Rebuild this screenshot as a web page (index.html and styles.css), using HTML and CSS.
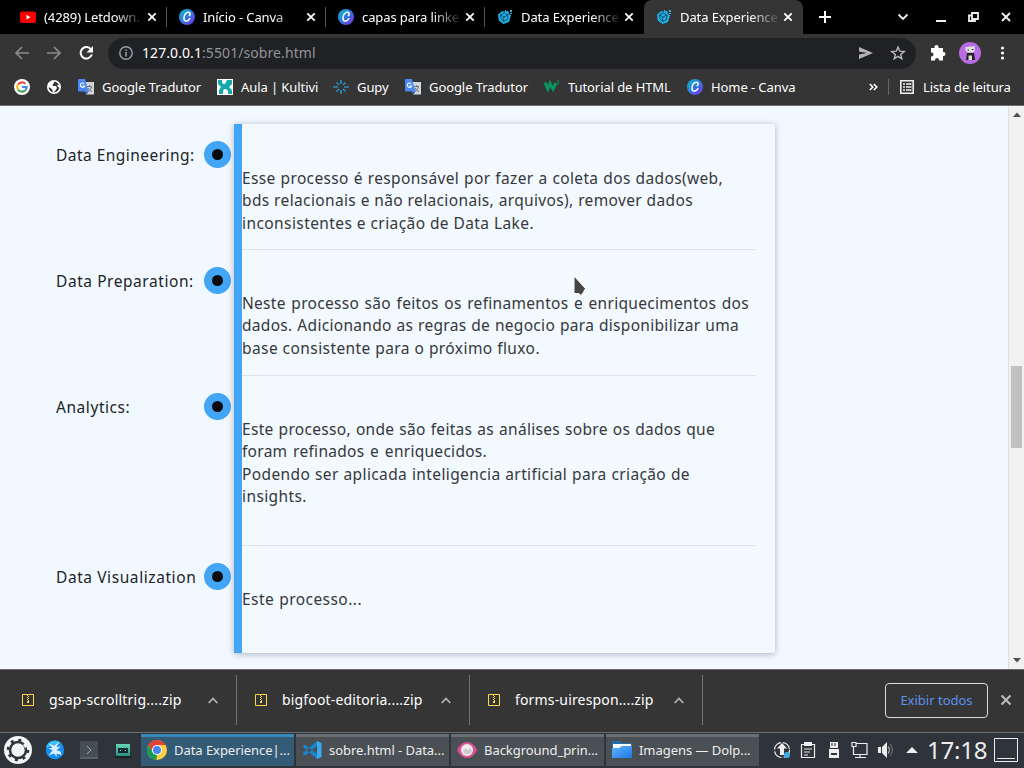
FILE: index.html
```html
<!DOCTYPE html>
<html lang="pt-BR">
<head>
<meta charset="utf-8">
<title>Data Experience</title>
<link rel="stylesheet" href="styles.css">
</head>
<body>
<svg class="defs" width="0" height="0">
  <defs>
    <linearGradient id="canvaFill" x1="0" y1="0" x2="1" y2="1"><stop offset="0" stop-color="#12bccd"/><stop offset=".4" stop-color="#2587dc"/><stop offset="1" stop-color="#7d2ae8"/></linearGradient>
    <linearGradient id="folderFill" x1="0" y1="0" x2="1" y2="1"><stop offset="0" stop-color="#5fb4ff"/><stop offset="1" stop-color="#1c78e4"/></linearGradient>
    <linearGradient id="tapeFill" x1="0" y1="0" x2="0" y2="1"><stop offset="0" stop-color="#65d6b4"/><stop offset="1" stop-color="#2d8d83"/></linearGradient>
    <symbol id="canva" viewBox="0 0 16 16"><circle cx="8" cy="8" r="8" fill="url(#canvaFill)"/><path d="M10.300 6.600c1.200-.7 1.300-3-.5-3.300-2.300-.4-4.900 2.600-4.900 5.700 0 4 3.900 4.100 6 .7" fill="none" stroke="#fff" stroke-width="1.500" stroke-linecap="round"/></symbol>
    <symbol id="cube" viewBox="0 0 16 16"><path d="M5 2.300 1 5.500l.8 6L6.500 15l5.500-2 1.700-6-3-4z" fill="#20b0e8"/><path d="m3.500 6 3.800-2L11 6l-.6 4.500L6.500 12.500 4 10zM3.500 6l3.300 2L11 6M6.800 8l-.3 4.500" fill="none" stroke="#0b455e" stroke-width=".9"/><path d="M9.500 2h2v2h-2zM13 1h2v2h-2zM13 4h2v1h-2zM8 1h1v2H8zM12 6h2v1h-2z" fill="#35b5e5"/></symbol>
    <symbol id="close" viewBox="0 0 10 10"><path d="m1.300 1.300 7.400 7.400m0-7.400L1.300 8.700" fill="none" stroke="currentColor" stroke-width="1.800"/></symbol>
    <symbol id="translate" viewBox="0 0 16 16"><path d="M6 3h10v12.500H8z" fill="#d3d6d9"/><path d="M9 7.500h5M11.500 6v1.500M13.500 7.500c-.5 2.500-2 4-3.500 5M10 9c1 2 2.500 3 4 3.500" fill="none" stroke="#68747c"/><path d="M0 1q0-1 1-1h6l3.500 12.500H1q-1 0-1-1z" fill="#4a89f3"/><path d="M6.200 4.700A2.200 2.200 0 1 0 6.600 7H4.600" fill="none" stroke="#fff" stroke-width="1.100"/><path d="M7 12.500h3.500L8.500 16z" fill="#3265c7"/></symbol>
    <symbol id="zip" viewBox="0 0 12 12"><path d="M.5.5h11v11H.5z" fill="none" stroke="#ffd451"/><path d="M5 1h1v1H5zM6 2h1v1H6zM5 3h1v1H5zM6 4h1v1H6zM5 5h1v1H5zM6 6h1v1H6zM5 7h2v2H5z" fill="#ffd451"/></symbol>
    <symbol id="up" viewBox="0 0 10 7"><path d="m.7 6 4.300-4.500L9.300 6" fill="none" stroke="#b5b5b5" stroke-width="1.700"/></symbol>
  </defs>
</svg>
<div class="desktop">
  <header class="tabs">
    <div class="tab"><svg class="i16" viewBox="0 0 16 16"><rect y="2.500" width="16" height="11.500" rx="2.500" fill="#f00"/><path d="m6.500 5.800 4 2.400-4 2.400z" fill="#fff"/></svg><span class="title">(4289) Letdown.</span><svg class="close"><use href="#close"/></svg></div>
    <div class="tab"><svg class="i16"><use href="#canva"/></svg><span class="title">Início - Canva</span><svg class="close"><use href="#close"/></svg></div>
    <div class="tab"><svg class="i16"><use href="#canva"/></svg><span class="title">capas para linke</span><svg class="close"><use href="#close"/></svg></div>
    <div class="tab last"><svg class="i16"><use href="#cube"/></svg><span class="title">Data Experience</span><svg class="close"><use href="#close"/></svg></div>
    <div class="tab active"><svg class="i16"><use href="#cube"/></svg><span class="title">Data Experience</span><svg class="close"><use href="#close"/></svg></div>
    <svg class="plus" viewBox="0 0 12 12"><path d="M6 0v12M0 6h12" stroke="#fff" stroke-width="2"/></svg>
    <svg class="window-buttons" viewBox="0 0 124 34"><g fill="none" stroke="#eee" stroke-width="1.800"><path d="m9.500 14.500 4.500 4.500 4.500-4.500M47 21h10M83 13h6v6h-6zM83 15.500h-3V21h6v-2"/><path d="m113 13 8 8m0-8-8 8" stroke-width="2"/></g></svg>
  </header>
  <div class="toolbar">
    <svg class="nav" viewBox="0 0 108 36"><g fill="none" stroke="#8b8b8b" stroke-width="1.700"><path d="M29 19H16m6-6-6 6 6 6M47 19h13m-6-6 6 6-6 6"/></g><path d="M91 15.500a5.700 5.700 0 1 0 .8 5" fill="none" stroke="#fff" stroke-width="2"/><path d="M93 12v6.500h-6.500z" fill="#fff"/></svg>
    <div class="address">
      <svg class="info" viewBox="0 0 14 14"><circle cx="7" cy="7" r="6.200" fill="none" stroke="#9aa0a6" stroke-width="1.400"/><path d="M7 6v4.500M7 3.500V5" stroke="#9aa0a6" stroke-width="1.500"/></svg>
      <span class="url"><b>127.0.0.1</b>:5501/sobre.html</span>
      <svg class="url-icons" viewBox="0 0 48 16"><path d="M1 2 15 8 1 14V9.500L9 8 1 6.500z" fill="#b4b4b4"/><path d="m40 2 1.700 4.200 4.500.3-3.500 2.900 1.100 4.400-3.800-2.400-3.800 2.400 1.100-4.400-3.500-2.900 4.500-.3z" fill="none" stroke="#bbb" stroke-width="1.400"/></svg>
    </div>
    <svg class="extensions" viewBox="0 0 108 36"><path d="M15 14h3.500v-1a2 2 0 0 1 4 0v1H27v4h.5a2 2 0 0 1 0 4H27v4.500h-4v-.5a2 2 0 0 0-4 0v.5h-4v-4h.5a2 2 0 0 0 0-4H15z" fill="#fff"/><circle cx="54" cy="19" r="11" fill="#b76ce3"/><path d="m49.500 13 2 0 1.500-.5h3l2.500-.5.5 4-1.500 2.500h-6l-2-2z" fill="#ddd"/><path d="m51 19-1 7h9l-1-7z" fill="#242126"/><path d="M52.500 21.500h3.500V26h-3.500z" fill="#ddd"/><path d="M51.500 15.500h1.500v1h-1.500zM56 15h1.500v1H56z" fill="#29242b"/><g fill="#fff"><circle cx="86.500" cy="14" r="1.600"/><circle cx="86.500" cy="19" r="1.600"/><circle cx="86.500" cy="24" r="1.600"/></g></svg>
  </div>
  <nav class="bookmarks">
    <div class="bookmark"><svg class="i16" viewBox="0 0 16 16"><circle cx="8" cy="8" r="8" fill="#fff"/><g fill="none" stroke-width="2"><path d="M11.300 4.800A4.700 4.700 0 0 0 4 5.500" stroke="#ea4335"/><path d="M4 5.500a4.700 4.700 0 0 0 0 5" stroke="#fbbc05"/><path d="M4 10.500a4.700 4.700 0 0 0 7.300.8" stroke="#34a853"/><path d="M8 8h4.700a4.700 4.700 0 0 1-1.400 3.300" stroke="#4285f4"/></g></svg></div>
    <div class="bookmark"><svg class="i16" viewBox="0 0 16 16"><circle cx="8" cy="8" r="6.200" fill="none" stroke="#fff" stroke-width="1.600"/><path d="M2 4.500 6 2l2.500 0L8 4 6.500 5.500 7 7h3l1 2-1.500 2.500L7 14l-.5-3L4 8.500H2zM11 6l3 0v3l-2-1z" fill="#fff"/></svg></div>
    <div class="bookmark"><svg class="i16"><use href="#translate"/></svg><span>Google Tradutor</span></div>
    <div class="bookmark"><svg class="i16" viewBox="0 0 16 16"><path d="M0 0h16v16H0z" fill="#fff"/><path d="M1 1h4v2l1 2h2l2-4h5v4l-3 3 3 3v4h-4v-3l-2-2H7l-1 2v3H2v-4l2-3-3-3z" fill="#17a9ac"/></svg><span>Aula | Kultivi</span></div>
    <div class="bookmark"><svg class="i16" viewBox="0 0 16 16"><path d="M8 1v4M8 11v4M0 8h5M11 8h5M3.500 3.500 6 6M10 10l2.500 2.500M12.500 3.500 10 6M6 10l-2.500 2.500" stroke="#278fb9" stroke-width="1.700"/></svg><span>Gupy</span></div>
    <div class="bookmark"><svg class="i16"><use href="#translate"/></svg><span>Google Tradutor</span></div>
    <div class="bookmark"><svg class="i16" viewBox="0 0 16 16"><path d="m1 3.500 3 6.500 2-5.500L9 10l3-6" fill="none" stroke="#07965f" stroke-width="3"/><path d="M13 2h2l-1 1.500q2 .5 0 2h-1" fill="none" stroke="#07965f"/></svg><span>Tutorial de HTML</span></div>
    <div class="bookmark"><svg class="i16"><use href="#canva"/></svg><span>Home - Canva</span></div>
    <div class="reading"><svg class="more" viewBox="0 0 9 8"><path d="m.8 1 3 3-3 3M4.800 1l3 3-3 3" fill="none" stroke="#fff" stroke-width="1.600"/></svg><svg class="list" viewBox="0 0 14 14"><path d="M.8.800h12.400v12.400H.8z" fill="none" stroke="#eee" stroke-width="1.600"/><path d="M3 4h2M6 4h5.500M3 7h2M6 7h5.500M3 10h2M6 10h5.500" stroke="#eee" stroke-width="1.500"/></svg><span>Lista de leitura</span></div>
  </nav>
  <main class="page">
    <div class="labels">
      <div class="step"><span class="label">Data Engineering:</span><i class="dot"></i></div>
      <div class="step"><span class="label preparation">Data Preparation:</span><i class="dot"></i></div>
      <div class="step tall"><span class="label preparation">Analytics:</span><i class="dot"></i></div>
      <div class="step"><span class="label visualization">Data Visualization</span><i class="dot"></i></div>
    </div>
    <section class="card">
      <p class="entry first"><span class="line w481">Esse processo é responsável por fazer a coleta dos dados(web,</span><span class="line w451">bds relacionais e não relacionais, arquivos), remover dados</span><span class="line w292">inconsistentes e criação de Data Lake.</span></p>
      <p class="entry"><span class="line w507">Neste processo são feitos os refinamentos e enriquecimentos dos</span><span class="line w497">dados. Adicionando as regras de negocio para disponibilizar uma</span><span class="line w298">base consistente para o próximo fluxo.</span></p>
      <p class="entry tall"><span class="line w473">Este processo, onde são feitas as análises sobre os dados que</span><span class="line w245">foram refinados e enriquecidos.</span><span class="line w448">Podendo ser aplicada inteligencia artificial para criação de</span><span class="line w64">insights.</span></p>
      <p class="entry final"><span class="line w120">Este processo...</span></p>
    </section>
    <svg class="cursor" viewBox="0 0 16 22"><path d="M2 1v17.500h5l2 2 2-2.500 2.500-4.500z" fill="#454545" stroke="#fff"/></svg>
    <aside class="scrollbar"><svg class="arrow" viewBox="0 0 8 5"><path d="M0 5 4 .5 8 5z" fill="#505050"/></svg><i class="thumb"></i><svg class="arrow down" viewBox="0 0 8 5"><path d="m0 0 4 4.500L8 0z" fill="#505050"/></svg></aside>
  </main>
  <div class="downloads">
    <div class="file"><svg class="zip"><use href="#zip"/></svg><span>gsap-scrolltrig....zip</span><svg class="up"><use href="#up"/></svg></div>
    <div class="file"><svg class="zip"><use href="#zip"/></svg><span>bigfoot-editoria....zip</span><svg class="up"><use href="#up"/></svg></div>
    <div class="file"><svg class="zip"><use href="#zip"/></svg><span>forms-uirespon....zip</span><svg class="up"><use href="#up"/></svg></div>
    <span class="show-all">Exibir todos</span>
    <svg class="dismiss" viewBox="0 0 12 12"><use href="#close" width="12" height="12"/></svg>
  </div>
  <footer class="taskbar">
    <svg class="launchers" viewBox="0 0 141 36"><circle cx="18" cy="18" r="14" fill="#f3f4f5"/><circle cx="18" cy="18" r="8" fill="none" stroke="#2f343a" stroke-width="2.500"/><circle cx="18" cy="18" r="10" fill="none" stroke="#2f343a" stroke-width="2.600" stroke-dasharray="3 4.854"/><path d="m23 13 5-5 2 4-5 4z" fill="#f3f4f5"/>
      <circle cx="55" cy="18" r="9.200" fill="#168df1"/><path d="M46 16a9 9 0 0 1 15-5l-8 2z" fill="#36c1fa"/><path d="m48.500 11.500 5.500 2 5.500-3.500-3 5 4.500-.5-4.500 3.500 4 1.500 1 3.500-5-1.500.500 3.500-3-3.500-5.500 2 4-5-4-2.500h4z" fill="#d9efff"/>
      <path d="M80 9h18v18H80z" fill="#454e50"/><path d="M80 25h18v2H80z" fill="#596264"/><path d="m87 14 4 4-4 4" fill="none" stroke="#a0a8aa"/>
      <path d="M115 23h16v3h-16z" fill="#172326"/><path d="M116 12h14v12h-14z" fill="url(#tapeFill)"/><path d="M118 16h10v5h-10z" fill="#132d30"/><path d="M120 18h1v1h-1zM125 18h1v1h-1z" fill="#86efd0"/></svg>
    <div class="task current"><svg class="i20" viewBox="0 0 20 20"><circle cx="10" cy="10" r="10" fill="#ffcd40"/><path d="M1.300 5A10 10 0 0 1 18.700 5H10L5.700 12.500z" fill="#e04436"/><path d="M1.300 5 5.700 12.500 10 15 9.500 20A10 10 0 0 1 1.300 5" fill="#179c52"/><circle cx="10" cy="10" r="5" fill="#fff"/><circle cx="10" cy="10" r="4" fill="#4285f4"/></svg><span>Data Experience|...</span></div>
    <div class="task"><svg class="i20" viewBox="0 0 20 20"><path d="m1 6 2-1.500L15 14v5L1 7zM1 14l2 1.500L15 6V1L1 13z" fill="#1686ce"/><path d="m15 1 4.500 2v14L15 19z" fill="#3aabf0"/></svg><span>sobre.html - Data...</span></div>
    <div class="task"><svg class="i20" viewBox="0 0 20 20"><path d="M0 10Q4 2 10 2t10 8q-4 8-10 8T0 10" fill="#dc4f96"/><circle cx="10" cy="10" r="6" fill="#eee"/><path d="m6 11 3-3 2 2 2-2 2 3-2 3H8z" fill="#cacaca"/></svg><span>Background_prin...</span></div>
    <div class="task"><svg class="i20" viewBox="0 0 20 20"><path d="M0 1h8l2 2h10v6H0z" fill="#236fab"/><path d="M1 4h18v5H1z" fill="#fff"/><path d="M0 8h7l3-2h10v12H0z" fill="url(#folderFill)"/></svg><span>Imagens — Dolp...</span></div>
    <svg class="tray" viewBox="0 0 165 36"><g fill="none" stroke="#eee" stroke-width="1.200"><circle cx="21" cy="18" r="7.500" stroke-dasharray="10 2"/><path d="M40.500 12.500h13v13h-13zM43 17h8M43 20h6M43 23h4M95 11.500h11v11H95M91 10.500v4h4v-4zM92.500 14.500v8H95M99 23v2m-5 .500h11"/><path d="M129 12q5 5.500 0 12" stroke="#6a6e72"/><path d="M127 14.500q3 3.500 0 7" stroke="#aaa"/></g><path d="m21 11 5 5.500h-3V23h-4v-6.500h-3zM43 10h8v4h-8zM69 10h8v6h-8zM68 17h10v9H68zM117 15h3v6h-3zM121 15l5-5v16l-5-5zM145 21l6-6 6 6z" fill="#eee"/><path d="M71 11v3m3-3v3" stroke="#2f343a"/><path d="M70 22h6" stroke="#2f343a" stroke-width="2"/><circle cx="26" cy="23" r="3" fill="#3daee9"/></svg>
    <time class="clock">17:18</time>
    <svg class="show-desktop" viewBox="0 0 24 24"><path d="M.5.500h23v23H.5zM3 20.500h18" fill="none" stroke="#eee"/></svg>
  </footer>
</div>
</body>
</html>
```
FILE: styles.css
```css
* { box-sizing: border-box; }
body { margin: 0; font-family: "Noto Sans", sans-serif; font-size: 13px; color: #fff; }
svg { display: block; flex: none; }
.defs { position: absolute; }
.desktop { width: 1024px; height: 768px; display: flex; flex-direction: column; overflow: hidden; position: relative; }
.i16 { width: 16px; height: 16px; }
.i20 { width: 20px; height: 20px; }

.tabs { height: 34px; background: #000; display: flex; align-items: center; padding-left: 8px; flex: none; }
.tab { width: 159px; height: 34px; display: flex; align-items: center; padding-left: 12px; background: linear-gradient(#555, #555) right center / 1px 20px no-repeat; flex: none; }
.tab.last { background: none; }
.tab.active { background: #353535; border-radius: 8px 8px 0 0; }
.title { width: 98px; margin-left: 8px; white-space: nowrap; letter-spacing: -.1px; mask-image: linear-gradient(90deg, #000 72%, rgba(0, 0, 0, .15) 98%); }
.close { width: 10px; height: 10px; margin-left: 5px; color: #fff; }
.plus { width: 12px; height: 12px; margin-left: 16px; }
.window-buttons { width: 124px; height: 34px; margin-left: 58px; }

.toolbar { height: 35px; background: #353535; display: flex; flex: none; }
.nav { width: 108px; height: 36px; }
.address { width: 808px; height: 31px; margin-top: 4px; border-radius: 16px; background: #202124; display: flex; align-items: center; padding: 0 0 2px 11px; }
.info { width: 14px; height: 14px; margin-top: 1px; }
.url { width: 708px; margin-left: 9px; font-size: 14px; letter-spacing: .08px; color: #929497; }
.url b { color: #fff; font-weight: 400; }
.url-icons { width: 48px; height: 16px; margin: 1px 0 0 8px; }
.extensions { width: 108px; height: 36px; }

.bookmarks { height: 37px; padding-bottom: 1px; background: #353535; border-bottom: 1px solid #6b6b6b; display: grid; grid-template-columns: 32px 32px 139px 116px 72px 139px 143px 182px 155px; align-items: center; padding-left: 14px; letter-spacing: -.08px; flex: none; }
.bookmark { display: flex; align-items: center; gap: 8px; white-space: nowrap; }
.reading { display: flex; align-items: center; white-space: nowrap; letter-spacing: -.12px; background: linear-gradient(#666, #666) 19px center / 1px 16px no-repeat; }
.more { width: 9px; height: 8px; }
.list { width: 14px; height: 14px; margin: 0 9px 0 22px; }

.page { height: 563px; background: #f1f8ff; display: flex; flex: none; color: #222426; font-size: 15.500px; line-height: 22.400px; position: relative; }
.labels { width: 234px; padding: 35px 0 0 56px; flex: none; }
.step { height: 126px; display: flex; align-items: flex-start; }
.step.tall { height: 170px; }
.label { margin-top: 3px; white-space: nowrap; letter-spacing: .46px; }
.label.preparation { letter-spacing: .56px; }
.label.visualization { letter-spacing: .58px; }
.dot { width: 27px; height: 27px; border: 8px solid #42a5f5; border-radius: 50%; background: #0b0b0d; margin-left: auto; margin-right: 3px; }
.card { width: 541px; height: 529px; margin-top: 18px; border-left: 8px solid #42a5f5; border-radius: 0 2px 2px 0; background: #f2f9ff; box-shadow: 0 1px 6px rgba(40, 45, 80, .35); padding-right: 20px; flex: none; }
.entry { margin: 0; height: 126px; padding-top: 42px; border-bottom: 1px solid #dce3ee; color: #36383b; }
.entry.first { padding-top: 42.700px; }
.entry.tall { height: 170px; }
.entry.final { height: 107px; border: 0; }
.line { display: block; text-align: justify; text-align-last: justify; letter-spacing: .3px; }
.w481 { width: 481px; letter-spacing: .36px; }
.w451 { width: 451px; letter-spacing: .36px; }
.w292 { width: 292px; letter-spacing: .42px; }
.w507 { width: 507px; }
.w497 { width: 497px; }
.w298 { width: 298px; letter-spacing: .42px; }
.w473 { width: 473px; }
.w245 { width: 245px; letter-spacing: .28px; }
.w448 { width: 448px; letter-spacing: .38px; }
.w64 { width: 80px; text-align-last: left; letter-spacing: .4px; }
.w120 { width: 120px; letter-spacing: .45px; }
.cursor { position: absolute; left: 572px; top: 169px; width: 16px; height: 22px; }
.scrollbar { width: 16px; margin-left: auto; background: #f1f1f1; border-left: 1px solid #dde1e6; display: flex; flex-direction: column; align-items: center; padding: 6px 0; }
.arrow { width: 8px; height: 5px; }
.thumb { width: 11px; height: 82px; background: #c1c1c1; margin-top: 249px; }
.down { margin-top: auto; }

.downloads { height: 63px; background: #353535; border-top: 1px solid #6a6a6a; display: flex; align-items: center; padding: 0 0 2px 4px; font-size: 14px; letter-spacing: .16px; flex: none; }
.file { width: 233px; height: 50px; border-right: 1px solid #727272; display: flex; align-items: center; padding-left: 18px; }
.file span { width: 144px; margin-left: 15px; padding-bottom: 2px; white-space: nowrap; }
.file:first-child span { letter-spacing: .22px; }
.zip { width: 12px; height: 12px; }
.up { width: 10px; height: 7px; margin-left: 15px; }
.show-all { width: 103px; height: 35px; margin-left: 182px; border: 1px solid #ddd; border-radius: 4px; color: #5e92f0; display: grid; place-items: center; font-size: 13px; letter-spacing: 0; }
.dismiss { width: 12px; height: 12px; margin-left: 12px; color: #bbb; }

.taskbar { height: 36px; background: #2f343a; box-shadow: inset 0 1px #6a6d70; display: flex; align-items: center; flex: none; letter-spacing: -.05px; }
.launchers { width: 141px; height: 36px; }
.task { width: 153px; height: 32px; margin-right: 2px; background: #4b5054; border-top: 3px solid #6b6f72; display: flex; align-items: center; padding: 0 0 3px 6px; gap: 7px; white-space: nowrap; color: #eee; flex: none; }
.task.current { background: #345b76; border-top-color: #3988b7; }
.tray { width: 165px; height: 36px; }
.clock { width: 68px; padding-left: 1px; font-size: 24px; line-height: 34px; letter-spacing: -.2px; color: #eee; }
.show-desktop { width: 24px; height: 24px; }
```
